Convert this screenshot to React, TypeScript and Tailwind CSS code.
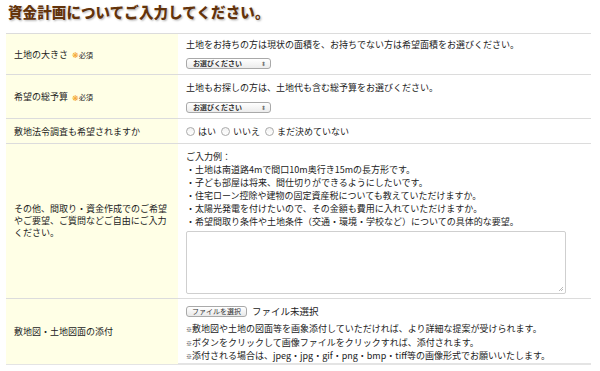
const jp = { fontFamily: '"Noto Sans CJK JP", "Noto Sans", sans-serif' }

function Required() {
  return (
    <span className="ml-1 inline-flex items-center align-middle">
      <span className="text-[8px] leading-none text-[#f4a021]">❋</span>
      <span className="text-[7px] leading-none text-[#222]">必須</span>
    </span>
  )
}

function SelectBox() {
  return (
    <div className="mt-[7px] flex h-[11px] w-[85px] items-center justify-between rounded-[3px] border border-[#a9a9a9] bg-gradient-to-b from-white to-[#ececec] pl-[6px] pr-[4px]">
      <span className="text-[7px] font-bold leading-none text-[#333]">お選びください</span>
      <span className="text-[6px] leading-none text-[#777]">⬍</span>
    </div>
  )
}

function Radio({ label }: { label: string }) {
  return (
    <span className="mr-[5px] inline-flex items-center">
      <span className="mr-[3px] inline-block h-[9px] w-[9px] rounded-full border border-[#aaa] bg-gradient-to-b from-[#f2f2f2] to-white" />
      {label}
    </span>
  )
}

function Row({ label, children, className }: { label: React.ReactNode; children: React.ReactNode; className: string }) {
  return (
    <div className={`grid grid-cols-[172px_1fr] border-b border-[#dcdcdc] ${className}`}>
      <div className="flex items-center bg-[#ffffe6] px-[8px]">{label}</div>
      <div className="pl-[8px] pr-[20px]">{children}</div>
    </div>
  )
}

export default function App() {
  const examples = [
    '・土地は南道路4mで間口10m奥行き15mの長方形です。',
    '・子ども部屋は将来、間仕切りができるようにしたいです。',
    '・住宅ローン控除や建物の固定資産税についても教えていただけますか。',
    '・太陽光発電を付けたいので、その金額も費用に入れていただけますか。',
    '・希望間取り条件や土地条件（交通・環境・学校など）についての具体的な要望。',
  ]
  const notes = [
    '敷地図や土地の図面等を画象添付していただければ、より詳細な提案が受けられます。',
    'ボタンをクリックして画像ファイルをクリックすれば、添付されます。',
    '添付される場合は、jpeg・jpg・gif・png・bmp・tiff等の画像形式でお願いいたします。',
  ]

  return (
    <div className="h-[371px] w-[600px] overflow-hidden bg-white text-[9px] leading-[13px] text-[#222]" style={jp}>
      <h1 className="h-[33px] pl-[8px] pt-[3px] text-[14.5px] font-black leading-[18px] tracking-[0.1px] text-[#63330b] [text-shadow:0_0_2px_#fff,1px_1px_2px_rgba(0,0,0,0.35)]">
        資金計画についてご入力してください。
      </h1>

      <div className="ml-[6px] w-[585px] border-t border-[#dcdcdc]">
        <Row label={<span>土地の大きさ<Required /></span>} className="h-[41px]">
          <div className="pt-[4px]">土地をお持ちの方は現状の面積を、お持ちでない方は希望面積をお選びください。</div>
          <SelectBox />
        </Row>

        <Row label={<span>希望の総予算<Required /></span>} className="h-[44px]">
          <div className="pt-[6px]">土地もお探しの方は、土地代も含む総予算をお選びください。</div>
          <div className="pt-[1px]">
            <SelectBox />
          </div>
        </Row>

        <Row label="敷地法令調査も希望されますか" className="h-[25px]">
          <div className="flex h-full items-center">
            <Radio label="はい" />
            <Radio label="いいえ" />
            <Radio label="まだ決めていない" />
          </div>
        </Row>

        <Row
          label={<span className="leading-[12px]">その他、間取り・資金作成でのご希望やご要望、ご質問などご自由にご入力ください。</span>}
          className="h-[155px]"
        >
          <div className="pt-[6px]">
            <div>ご入力例：</div>
            {examples.map((e) => (
              <div key={e}>{e}</div>
            ))}
          </div>
          <div className="relative mt-[3px] h-[63px] w-[380px] rounded-[2px] border border-[#cfcfcf] bg-white">
            <svg className="absolute bottom-[1px] right-[1px]" width="6" height="6" viewBox="0 0 6 6">
              <path d="M5 1L1 5M5 3L3 5" stroke="#aaa" strokeWidth="0.8" />
            </svg>
          </div>
        </Row>

        <Row label="敷地図・土地図面の添付" className="h-[66px] border-b-2 border-b-[#e4e4e4]">
          <div className="flex items-center pt-[6px]">
            <span className="inline-flex h-[11px] w-[61px] items-center justify-center rounded-[3px] border border-[#a9a9a9] bg-gradient-to-b from-white to-[#e9e9e9] text-[7px] leading-none text-[#333]">
              ファイルを選択
            </span>
            <span className="ml-[5px] text-[9.5px]">ファイル未選択</span>
          </div>
          <div className="pt-[5px] leading-[12.5px]">
            {notes.map((n) => (
              <div key={n}>
                <span className="text-[6px]">※</span>
                {n}
              </div>
            ))}
          </div>
        </Row>
      </div>
    </div>
  )
}
